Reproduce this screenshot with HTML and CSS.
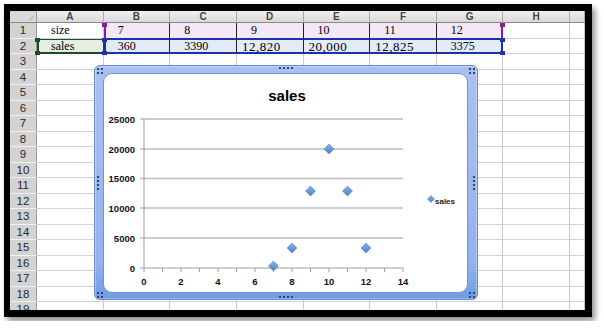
FILE: index.html
```html
<!DOCTYPE html>
<html lang="en">
<head>
    <meta charset="UTF-8">
    <title>sales</title>
    <link rel="stylesheet" href="styles.css">
</head>
<body>
    <div class="window">
        <div class="sheet">
            <div class="grid" id="grid">
                <div class="corner"></div>
                <div class="colhead">A</div>
                <div class="colhead">B</div>
                <div class="colhead">C</div>
                <div class="colhead">D</div>
                <div class="colhead">E</div>
                <div class="colhead">F</div>
                <div class="colhead">G</div>
                <div class="colhead">H</div>
                <div class="colhead"></div>

                <div class="rowhead">1</div>
                <div class="cell">size</div>
                <div class="cell pink first">7</div>
                <div class="cell pink">8</div>
                <div class="cell pink">9</div>
                <div class="cell pink">10</div>
                <div class="cell pink">11</div>
                <div class="cell pink last">12</div>
                <div class="cell"></div>
                <div class="cell"></div>

                <div class="rowhead">2</div>
                <div class="cell green">sales</div>
                <div class="cell blue first">360</div>
                <div class="cell blue">3390</div>
                <div class="cell blue wide">12,820</div>
                <div class="cell blue wide">20,000</div>
                <div class="cell blue wide">12,825</div>
                <div class="cell blue last">3375</div>
                <div class="cell"></div>
                <div class="cell"></div>
            </div>

            <div class="chart">
                <div class="plot">
                    <svg width="363" height="218" viewBox="104 74 363 218">
                        <defs>
                            <linearGradient id="mk" x1="0" y1="0" x2="0" y2="1">
                                <stop offset="0" stop-color="#8cb5ee"/>
                                <stop offset="1" stop-color="#4a7dcb"/>
                            </linearGradient>
                            <path id="dia" d="M0,-5 L5,0 L0,5 L-5,0 Z"/>
                            <path id="dia-sm" d="M0,-3.5 L3.5,0 L0,3.5 L-3.5,0 Z"/>
                        </defs>

                        <text class="title" x="287" y="101" text-anchor="middle">sales</text>

                        <g class="grid-lines">
                            <line x1="140" y1="119" x2="403" y2="119"/>
                            <line x1="140" y1="149" x2="403" y2="149"/>
                            <line x1="140" y1="178.5" x2="403" y2="178.5"/>
                            <line x1="140" y1="208" x2="403" y2="208"/>
                            <line x1="140" y1="238" x2="403" y2="238"/>
                        </g>

                        <g class="axis">
                            <line x1="144" y1="119" x2="144" y2="268"/>
                            <line x1="140" y1="268" x2="403" y2="268"/>
                            <line x1="144" y1="268" x2="144" y2="272"/>
                            <line x1="162.5" y1="268" x2="162.5" y2="272"/>
                            <line x1="181" y1="268" x2="181" y2="272"/>
                            <line x1="199.5" y1="268" x2="199.5" y2="272"/>
                            <line x1="218" y1="268" x2="218" y2="272"/>
                            <line x1="236.5" y1="268" x2="236.5" y2="272"/>
                            <line x1="255" y1="268" x2="255" y2="272"/>
                            <line x1="273.5" y1="268" x2="273.5" y2="272"/>
                            <line x1="292" y1="268" x2="292" y2="272"/>
                            <line x1="310.5" y1="268" x2="310.5" y2="272"/>
                            <line x1="329" y1="268" x2="329" y2="272"/>
                            <line x1="347.5" y1="268" x2="347.5" y2="272"/>
                            <line x1="366" y1="268" x2="366" y2="272"/>
                            <line x1="384.5" y1="268" x2="384.5" y2="272"/>
                            <line x1="403" y1="268" x2="403" y2="272"/>
                        </g>

                        <g class="labels" text-anchor="end">
                            <text x="135" y="122.5">25000</text>
                            <text x="135" y="152.5">20000</text>
                            <text x="135" y="182">15000</text>
                            <text x="135" y="211.5">10000</text>
                            <text x="135" y="241.5">5000</text>
                            <text x="135" y="271.5">0</text>
                        </g>
                        <g class="labels" text-anchor="middle">
                            <text x="144" y="284.5">0</text>
                            <text x="181" y="284.5">2</text>
                            <text x="218" y="284.5">4</text>
                            <text x="255" y="284.5">6</text>
                            <text x="292" y="284.5">8</text>
                            <text x="329" y="284.5">10</text>
                            <text x="366" y="284.5">12</text>
                            <text x="403" y="284.5">14</text>
                        </g>

                        <g class="markers">
                            <use href="#dia" x="273.5" y="266"/>
                            <use href="#dia" x="292" y="248"/>
                            <use href="#dia" x="310.5" y="191"/>
                            <use href="#dia" x="329" y="149"/>
                            <use href="#dia" x="347.5" y="191"/>
                            <use href="#dia" x="366" y="248"/>
                            <use href="#dia-sm" x="431" y="199"/>
                        </g>
                        <text class="legend" x="435" y="203.5">sales</text>
                    </svg>
                </div>
                <span class="handle top"></span>
                <span class="handle bottom"></span>
                <span class="handle left"></span>
                <span class="handle right"></span>
                <span class="handle tl"></span>
                <span class="handle tr"></span>
                <span class="handle bl"></span>
                <span class="handle br"></span>
            </div>
        </div>
    </div>

    <script>
        // empty rows 3..19
        const grid = document.getElementById('grid');
        for (let r = 3; r <= 19; r++) {
            const head = document.createElement('div');
            head.className = 'rowhead';
            head.textContent = r;
            grid.appendChild(head);
            for (let c = 0; c < 9; c++) {
                const cell = document.createElement('div');
                cell.className = 'cell';
                grid.appendChild(cell);
            }
        }
    </script>
</body>
</html>
```

FILE: styles.css
```css
* {
    box-sizing: border-box;
}

body {
    margin: 0;
    background-color: #fff;
    font-family: "Liberation Sans", Arial, sans-serif;
}

.window {
    margin: 4px;
    width: 588px;
    height: 313px;
    border-style: solid;
    border-color: #000;
    border-width: 7px 7px 7px 6px;
    box-shadow: 3px 4px 6px rgba(0, 0, 0, 0.45);
    background-color: #fff;
    overflow: hidden;
}

.sheet {
    position: relative;
    height: 100%;
    overflow: hidden;
}

.grid {
    display: grid;
    grid-template-columns: 27px repeat(8, 66.625px) 1fr;
    grid-template-rows: 12px;
    grid-auto-rows: 15.5px;
}

.corner {
    background: linear-gradient(135deg, transparent 62%, #b9b9b9 62%, #e6e6e6 100%) no-repeat right 2px bottom 1px / 9px 9px, #d9d9d9;
    border-right: 1px solid #9a9a9a;
    border-bottom: 1px solid #8a8a8a;
}

.colhead {
    background: linear-gradient(#f1f1f1, #d8d8d8);
    border-right: 1px solid #a9a9a9;
    border-bottom: 1px solid #8a8a8a;
    font-size: 10px;
    font-weight: bold;
    line-height: 11px;
    text-align: center;
    color: #444;
}

.rowhead {
    background-color: #d3d3d3;
    border-bottom: 1px solid #f1f1f1;
    border-right: 1px solid #9a9a9a;
    font-size: 11.5px;
    line-height: 15px;
    text-align: center;
    color: #2a2a2a;
}

.cell {
    position: relative;
    border-right: 1px solid #cacaca;
    border-bottom: 1px solid #d2d2d2;
    padding-left: 14px;
    font-family: "Liberation Serif", "Times New Roman", serif;
    font-size: 12px;
    line-height: 15px;
    white-space: nowrap;
    color: #000;
}

.cell.wide {
    padding-left: 5px;
    font-size: 13px;
    letter-spacing: 0.5px;
}

/* size row: purple range */
.pink {
    background-color: #f4e7f6;
    border-right-color: #222;
    border-bottom-color: #1a33a6;
}

.pink.first {
    box-shadow: inset 2px 0 #8b1c9c;
}

.pink.last {
    border-right-color: #8b1c9c;
    box-shadow: inset -1px 0 #8b1c9c;
}

.pink.first::before,
.pink.last::before {
    content: "";
    position: absolute;
    top: 0;
    width: 5px;
    height: 4px;
    background-color: #8b1c9c;
}

.pink.first::before {
    left: -2px;
}

.pink.last::before {
    right: -3px;
}

/* sales row: blue range */
.blue {
    background-color: #e3eaf8;
    border-right-color: #222;
    border-bottom-color: #1a33a6;
    box-shadow: inset 0 1px #1a33a6, inset 0 -1px #1a33a6;
}

.blue.first {
    box-shadow: inset 0 1px #1a33a6, inset 0 -1px #1a33a6, inset 2px 0 #1a33a6;
}

.blue.last {
    border-right-color: #1a33a6;
    box-shadow: inset 0 1px #1a33a6, inset 0 -1px #1a33a6, inset -1px 0 #1a33a6;
}

.blue.first::before,
.blue.first::after,
.blue.last::before,
.blue.last::after,
.green::before,
.green::after {
    content: "";
    position: absolute;
    width: 5px;
    height: 4px;
    background-color: #1a33b6;
    z-index: 1;
}

.blue.first::before,
.blue.last::before,
.green::before {
    top: -1px;
}

.blue.first::after,
.blue.last::after,
.green::after {
    bottom: -2px;
}

.blue.first::before,
.blue.first::after {
    left: -2px;
}

.blue.last::before,
.blue.last::after {
    right: -3px;
}

.green {
    background-color: #e5eee3;
    border-right-color: #1c4d1c;
    border-bottom-color: #1c4d1c;
    box-shadow: inset 2px 0 #1c4d1c, inset 0 1px #1c4d1c, inset 0 -1px #1c4d1c;
}

.green::before,
.green::after {
    left: -2px;
    background-color: #1c4d1c;
}

/* chart object */
.chart {
    position: absolute;
    left: 84px;
    top: 54px;
    width: 384px;
    height: 235px;
    padding: 7px 9px 6px 8px;
    border: 1px solid #6a8ad0;
    border-radius: 6px;
    background: linear-gradient(#a9c1f0, #93b3ec 85%, #6f9be2);
    box-shadow: inset 0 0 0 1px rgba(255, 255, 255, 0.3);
}

.plot {
    width: 365px;
    height: 220px;
    border: 1px solid #6f93da;
    border-radius: 9px;
    background-color: #fff;
    overflow: hidden;
}

.plot svg {
    display: block;
}

.title {
    font-family: "Liberation Sans", Arial, sans-serif;
    font-size: 15px;
    font-weight: bold;
    fill: #000;
}

.grid-lines line {
    stroke: #bcbcbc;
    stroke-width: 1.5;
}

.axis line {
    stroke: #9c9c9c;
    stroke-width: 1;
}

.labels text {
    font-family: "Liberation Sans", Arial, sans-serif;
    font-size: 9.5px;
    font-weight: bold;
    fill: #111;
}

.markers use {
    fill: url(#mk);
    stroke: #4877c2;
    stroke-width: 0.5;
}

.legend {
    font-family: "Liberation Sans", Arial, sans-serif;
    font-size: 8px;
    font-weight: bold;
    fill: #222;
}

.handle {
    position: absolute;
    background: radial-gradient(circle, #2b4674 0.9px, transparent 1.3px) 0 0 / 4px 4px;
}

.handle.top,
.handle.bottom {
    left: 183px;
    width: 16px;
    height: 4px;
}

.handle.top {
    top: 0;
}

.handle.bottom {
    bottom: 0;
}

.handle.left,
.handle.right {
    top: 109px;
    width: 4px;
    height: 16px;
}

.handle.left {
    left: 1px;
}

.handle.right {
    right: 1px;
}

.handle.tl,
.handle.tr,
.handle.bl,
.handle.br {
    width: 8px;
    height: 8px;
}

.handle.tl {
    left: 1px;
    top: 1px;
}

.handle.tr {
    right: 1px;
    top: 1px;
}

.handle.bl {
    left: 1px;
    bottom: 0;
}

.handle.br {
    right: 1px;
    bottom: 0;
}
```
